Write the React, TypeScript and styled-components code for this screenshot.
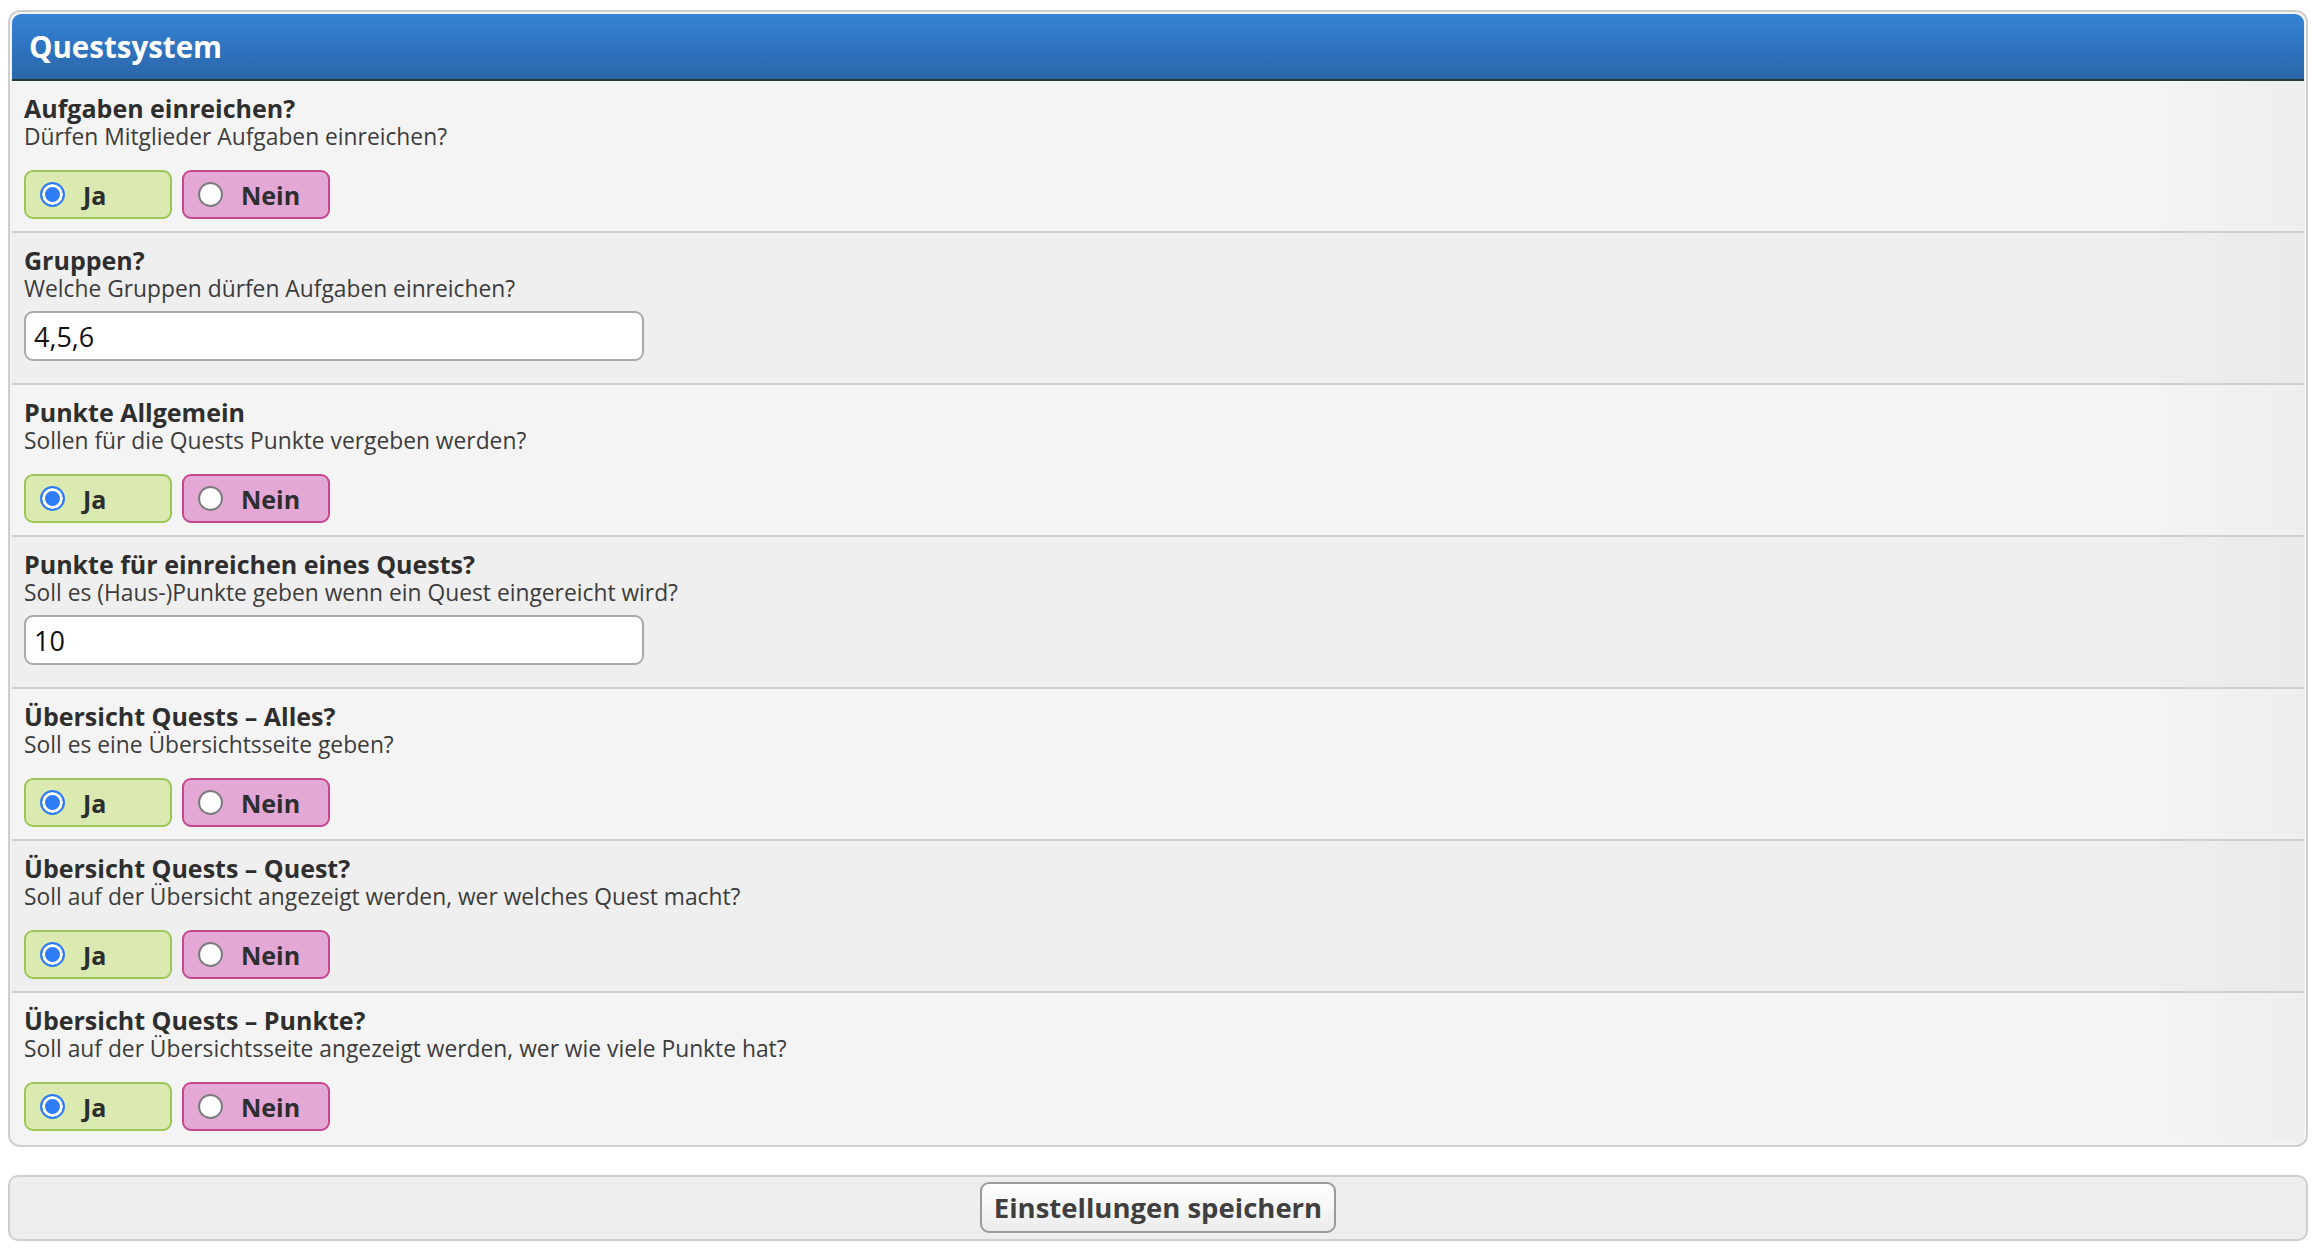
import React, { useState } from 'react';
import styled, { createGlobalStyle } from 'styled-components';

const GlobalStyle = createGlobalStyle`
  html, body {
    margin: 0;
    padding: 0;
    background: #fff;
  }
  body {
    font-family: "Open Sans", "Noto Sans", "DejaVu Sans", sans-serif;
    color: #333;
  }
`;

const Page = styled.div`
  padding: 10px 14px 12px 8px;
`;

const BorderWrapper = styled.div`
  border: 2px solid #cfcfcf;
  border-radius: 12px;
  padding: 2px;
  background: #f4f4f4;
  overflow: hidden;
`;

const Title = styled.div`
  height: 65px;
  display: flex;
  align-items: center;
  padding-left: 17px;
  border-radius: 9px 9px 0 0;
  background: linear-gradient(to bottom, #3584d6 0%, #2f74c0 50%, #2a67a9 100%);
  border-bottom: 2px solid #263c30;
  color: #fff;
  font-size: 29.5px;
  font-weight: 700;
`;

const Row = styled.div<{ $alt: boolean; $last: boolean }>`
  padding: 12px 12px 0;
  background: ${(p) => (p.$alt ? '#efefef' : '#f4f4f4')};
  background-image: linear-gradient(to right, transparent 93%, rgba(0, 0, 0, 0.025));
  border-bottom: ${(p) => (p.$last ? 'none' : '2px solid #d0d0d0')};
  height: ${(p) => (p.$last ? '150px' : '152px')};
  box-sizing: border-box;
`;

const Label = styled.div`
  font-size: 25px;
  line-height: 30px;
  font-weight: 700;
  color: #2e2e2e;
`;

const Description = styled.div`
  font-size: 22.8px;
  line-height: 28px;
  color: #3c3c3c;
`;

const RadioGroup = styled.div`
  display: flex;
  gap: 10px;
  margin-top: 19px;
`;

const RadioBox = styled.label<{ $tone: 'yes' | 'no' }>`
  box-sizing: border-box;
  width: 148px;
  height: 49px;
  display: flex;
  align-items: center;
  padding-left: 14px;
  border-radius: 9px;
  border: 2px solid ${(p) => (p.$tone === 'yes' ? '#9cc657' : '#c4468f')};
  background: ${(p) => (p.$tone === 'yes' ? '#dbeab0' : '#e3a8d3')};
  font-size: 25px;
  font-weight: 700;
  color: #2e2e2e;
  cursor: pointer;
`;

const Radio = styled.input`
  appearance: none;
  -webkit-appearance: none;
  box-sizing: border-box;
  width: 25px;
  height: 25px;
  margin: 0 18px 0 0;
  border-radius: 50%;
  border: 2px solid #7b7b7b;
  background: #fff;
  cursor: pointer;

  &:checked {
    border-color: #2f7df4;
    background: #2f7df4;
    box-shadow: inset 0 0 0 3px #fff;
  }
`;

const TextInput = styled.input`
  display: block;
  box-sizing: border-box;
  width: 620px;
  height: 50px;
  margin-top: 8px;
  padding: 0 8px;
  border: 2px solid #a9a9a9;
  border-radius: 9px;
  background: #fff;
  font-family: "Open Sans", "Noto Sans", sans-serif;
  font-size: 27px;
  color: #111;
  outline: none;
`;

const SaveBar = styled.div`
  margin-top: 28px;
  border: 2px solid #cfcfcf;
  border-radius: 10px;
  background: #eeeeee;
  padding: 5px 0 6px;
  display: flex;
  justify-content: center;
`;

const SaveButton = styled.button`
  box-sizing: border-box;
  width: 356px;
  height: 51px;
  border: 2px solid #9a9a9a;
  border-radius: 9px;
  background: linear-gradient(to bottom, #ffffff, #ececec);
  font-family: "Open Sans", "Noto Sans", sans-serif;
  font-size: 27.5px;
  font-weight: 700;
  color: #3f3f3f;
  cursor: pointer;
`;

type Setting =
  | { key: string; label: string; description: string; kind: 'yesno' }
  | { key: string; label: string; description: string; kind: 'text'; value: string };

const settings: Setting[] = [
  { key: 'submit', label: 'Aufgaben einreichen?', description: 'Dürfen Mitglieder Aufgaben einreichen?', kind: 'yesno' },
  { key: 'groups', label: 'Gruppen?', description: 'Welche Gruppen dürfen Aufgaben einreichen?', kind: 'text', value: '4,5,6' },
  { key: 'points', label: 'Punkte Allgemein', description: 'Sollen für die Quests Punkte vergeben werden?', kind: 'yesno' },
  { key: 'submitpoints', label: 'Punkte für einreichen eines Quests?', description: 'Soll es (Haus-)Punkte geben wenn ein Quest eingereicht wird?', kind: 'text', value: '10' },
  { key: 'overview', label: 'Übersicht Quests – Alles?', description: 'Soll es eine Übersichtsseite geben?', kind: 'yesno' },
  { key: 'overviewquest', label: 'Übersicht Quests – Quest?', description: 'Soll auf der Übersicht angezeigt werden, wer welches Quest macht?', kind: 'yesno' },
  { key: 'overviewpoints', label: 'Übersicht Quests – Punkte?', description: 'Soll auf der Übersichtsseite angezeigt werden, wer wie viele Punkte hat?', kind: 'yesno' },
];

const App: React.FC = () => {
  const [values, setValues] = useState<Record<string, string>>(() => {
    const init: Record<string, string> = {};
    settings.forEach((s) => {
      init[s.key] = s.kind === 'text' ? s.value : '1';
    });
    return init;
  });

  const update = (key: string, value: string) => setValues({ ...values, [key]: value });

  return (
    <Page>
      <GlobalStyle />
      <BorderWrapper>
        <Title>Questsystem</Title>
        {settings.map((s, i) => (
          <Row key={s.key} $alt={i % 2 === 1} $last={i === settings.length - 1}>
            <Label>{s.label}</Label>
            <Description>{s.description}</Description>
            {s.kind === 'yesno' ? (
              <RadioGroup>
                <RadioBox $tone="yes">
                  <Radio type="radio" name={s.key} checked={values[s.key] === '1'} onChange={() => update(s.key, '1')} />
                  Ja
                </RadioBox>
                <RadioBox $tone="no">
                  <Radio type="radio" name={s.key} checked={values[s.key] === '0'} onChange={() => update(s.key, '0')} />
                  Nein
                </RadioBox>
              </RadioGroup>
            ) : (
              <TextInput value={values[s.key]} onChange={(e) => update(s.key, e.target.value)} />
            )}
          </Row>
        ))}
      </BorderWrapper>
      <SaveBar>
        <SaveButton>Einstellungen speichern</SaveButton>
      </SaveBar>
    </Page>
  );
};

export default App;
